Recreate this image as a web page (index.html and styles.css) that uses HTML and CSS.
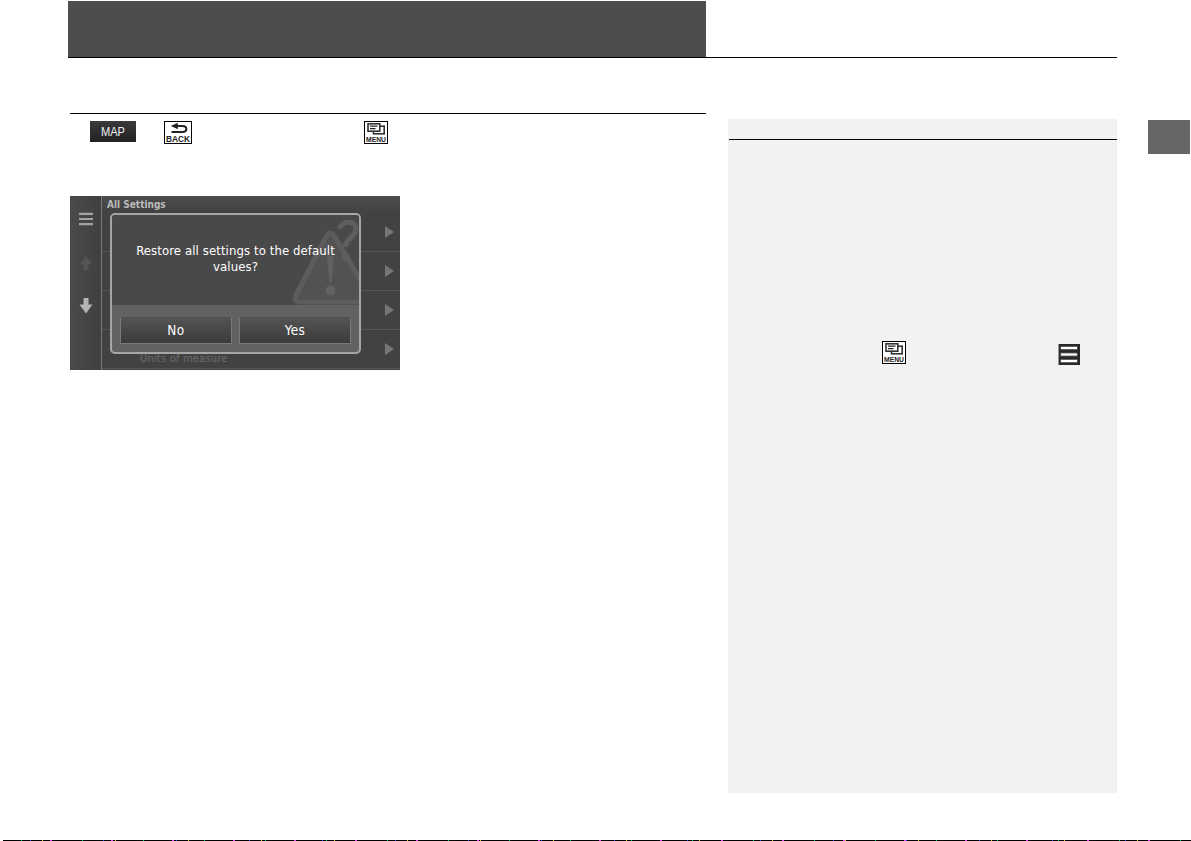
FILE: index.html
```html
<!DOCTYPE html>
<html lang="en">
<head>
<meta charset="UTF-8" />
<title>Restore all settings</title>
<link rel="stylesheet" href="styles.css">
</head>
<body>

<svg class="symbols" xmlns="http://www.w3.org/2000/svg">
  <symbol id="menu-key" viewBox="0 0 24 23">
    <rect x="0.5" y="0.5" width="23" height="22" fill="#fff" stroke="#000" />
    <rect x="9.5" y="5.2" width="10.7" height="7.6" fill="#fff" stroke="#333" stroke-width="1.6" />
    <rect x="4" y="2.8" width="11.8" height="7.4" fill="#fff" stroke="#333" stroke-width="1.6" />
    <path d="M6 5.2 H13.5 M6 7.7 H11.5" stroke="#222" stroke-width="1.2" />
    <text x="2" y="20.7" textLength="20" lengthAdjust="spacingAndGlyphs">MENU</text>
  </symbol>
</svg>

<div class="page">
  <header class="banner">
    <div class="banner-fill"></div>
  </header>

  <div class="columns">
    <main class="main">
      <div class="keys">
        <svg class="map-key" viewBox="0 0 46 21">
          <text x="11" y="15.2" textLength="24" lengthAdjust="spacingAndGlyphs">MAP</text>
        </svg>
        <svg class="back-key" viewBox="0 0 28 23">
          <rect x="0.5" y="0.5" width="27" height="22" fill="#fff" stroke="#000" />
          <path d="M13 5 H18.5 C23.6 5 23.6 10.9 18.5 10.9 H7.5" fill="none" stroke="#222" stroke-width="2" />
          <path d="M6.8 5 L13.8 1.8 V8.2 Z" fill="#222" />
          <text x="2" y="20.7" textLength="24" lengthAdjust="spacingAndGlyphs">BACK</text>
        </svg>
        <svg class="menu-key"><use href="#menu-key" /></svg>
      </div>

      <div class="screen">
        <div class="sidebar">
          <svg viewBox="0 0 31 174">
            <path d="M9 17.8 H23 M9 23 H23 M9 28.2 H23" stroke="#a3a2a3" stroke-width="2.2" />
            <path d="M16 60 L22 68 H18.5 V74 H13.5 V68 H10 Z" fill="#555455" />
            <path d="M13.5 102 H18.5 V108.5 H22.5 L16 117.5 L9.5 108.5 H13.5 Z" fill="#b5b4b5" />
          </svg>
        </div>
        <div class="list">
          <div class="list-title">All Settings</div>
          <div class="row"><span class="arrow"></span></div>
          <div class="row"><span class="arrow"></span></div>
          <div class="row"><span class="arrow"></span></div>
          <div class="row"><span class="row-label">Units of measure</span><span class="arrow"></span></div>
        </div>

        <div class="dialog">
          <div class="message">
            <svg class="warning" viewBox="0 0 66 90">
              <path d="M33 22 L3 80 Q0 87 7 87 H80 L42 22 Q37 14 33 22 Z" fill="#535253" stroke="#5d5c5d" stroke-width="5" />
              <path d="M34 43 Q37.5 37 41 43 L38.7 67 H36.3 Z" fill="#626162" />
              <circle cx="37.5" cy="75.5" r="5" fill="#626162" />
              <path d="M46 14 C50 4 64 6 63 14 C62 23 54 22 52 32" fill="none" stroke="#5f5e5f" stroke-width="5" />
              <circle cx="53" cy="42" r="4" fill="#5f5e5f" />
            </svg>
            <p>Restore all settings to the default<br>values?</p>
          </div>
          <div class="buttons">
            <button>No</button>
            <button>Yes</button>
          </div>
        </div>
      </div>
    </main>

    <aside class="notes">
      <div class="notes-head"></div>
      <div class="notes-icons">
        <svg class="menu-key"><use href="#menu-key" /></svg>
        <svg class="burger" viewBox="0 0 22 21">
          <rect width="22" height="21" fill="#2a282b" />
          <path d="M0.5 0 V21" stroke="#999" />
          <path d="M2.5 4 H19.5 M2.5 10.5 H19.5 M2.5 17 H19.5" stroke="#777" stroke-width="3.6" />
          <path d="M3 4 H19 M3 10.5 H19 M3 17 H19" stroke="#fff" stroke-width="2.2" />
        </svg>
      </div>
    </aside>

    <div class="tab"></div>
  </div>

  <div class="bottom-rule"></div>
</div>

</body>
</html>
```

FILE: styles.css
```css
* {
  box-sizing: border-box;
}

body {
  margin: 0;
  background: #fff;
  font-family: "DejaVu Sans Condensed", "DejaVu Sans", sans-serif;
}

svg {
  display: block;
}

.symbols {
  display: none;
}

.page {
  display: flex;
  flex-direction: column;
  width: 1191px;
  height: 841px;
  padding-top: 1px;
  overflow: hidden;
}

.banner {
  width: 1049px;
  height: 57px;
  margin-left: 68px;
  border-bottom: 1px solid #000;
}

.banner-fill {
  width: 638px;
  height: 56px;
  background: #4d4d4d;
}

.columns {
  display: flex;
  flex: 1;
  align-items: flex-start;
  padding-left: 70px;
}

.main {
  width: 636px;
  margin-top: 55px;
  border-top: 1px solid #000;
}

/* hardware keys */
.keys {
  display: flex;
  padding: 7px 0 0 20px;
  height: 82px;
}

.map-key {
  width: 46px;
  height: 21px;
  margin-right: 28px;
  background: linear-gradient(#3a393b, #222123);
}

.map-key text {
  font: 13px "Liberation Sans", sans-serif;
  fill: #eee;
}

.back-key {
  width: 28px;
  height: 23px;
  margin-right: 172px;
}

.menu-key {
  width: 24px;
  height: 23px;
}

.back-key text,
#menu-key text {
  font: bold 9px "Liberation Sans", sans-serif;
  fill: #222;
}

#menu-key text {
  font-size: 8px;
}

/* navigation screen */
.screen {
  position: relative;
  display: flex;
  width: 330px;
  height: 174px;
  background: #434243;
}

.sidebar {
  width: 32px;
  background: linear-gradient(90deg, #4b4a4b, #414041);
  border-right: 1px solid #7a797a;
}

.list {
  flex: 1;
  background: linear-gradient(#4d4c4d, #434243 17px);
}

.list-title {
  height: 17px;
  padding-left: 5px;
  color: #bbb;
  font-size: 10px;
  font-weight: bold;
  line-height: 17px;
}

.row {
  display: flex;
  align-items: center;
  height: 39px;
  padding: 0 6px 0 38px;
  border-bottom: 1px solid #575657;
}

.row-label {
  padding-top: 18px;
  color: #6c6b6c;
  font-size: 11px;
  letter-spacing: 0.2px;
  white-space: nowrap;
}

.arrow {
  margin-left: auto;
  border-left: 9px solid #777677;
  border-top: 6px solid transparent;
  border-bottom: 6px solid transparent;
}

.dialog {
  position: absolute;
  left: 40px;
  top: 17px;
  width: 251px;
  height: 141px;
  background: #636263;
  border: 2px solid #a7a6a7;
  border-radius: 5px;
  overflow: hidden;
}

.message {
  position: relative;
  height: 90px;
  background: #4a494a;
}

.message p {
  position: relative;
  margin: 0;
  padding-top: 28px;
  color: #fff;
  font-size: 13px;
  letter-spacing: 0.1px;
  line-height: 16px;
  text-align: center;
  white-space: nowrap;
}

.warning {
  position: absolute;
  right: 0;
  top: 0;
  width: 66px;
  height: 90px;
}

.buttons {
  display: flex;
  gap: 7px;
  padding: 12px 8px 0;
}

.buttons button {
  width: 112px;
  height: 27px;
  padding: 0 0 2px;
  background: linear-gradient(#555455, #454445 60%, #3c3b3c);
  border: 1px solid #7a797a;
  border-top-color: #525152;
  color: #fff;
  font-family: inherit;
  font-size: 13.5px;
  letter-spacing: 0.4px;
}

/* side notes */
.notes {
  width: 389px;
  height: 674px;
  margin: 61px 0 0 22px;
  background: #f2f2f2;
}

.notes-head {
  height: 21px;
  margin-left: 1px;
  border-bottom: 1px solid #000;
}

.notes-icons {
  display: flex;
  padding: 201px 0 0 154px;
}

.burger {
  width: 22px;
  height: 21px;
  margin: 3px 0 0 152px;
}

.tab {
  width: 42px;
  height: 34px;
  margin: 62px 0 0 31px;
  background: #666;
}

.bottom-rule {
  height: 1px;
  margin-left: 3px;
  background:
    repeating-linear-gradient(90deg, transparent 0 18px, #0c6 18px 19px, transparent 19px 47px, #d4e 47px 49px, transparent 49px 61px),
    repeating-linear-gradient(90deg, #000 0 27px, #24d 27px 28px, #000 28px 39px, #dc4 39px 40px, #000 40px 73px);
}
```
